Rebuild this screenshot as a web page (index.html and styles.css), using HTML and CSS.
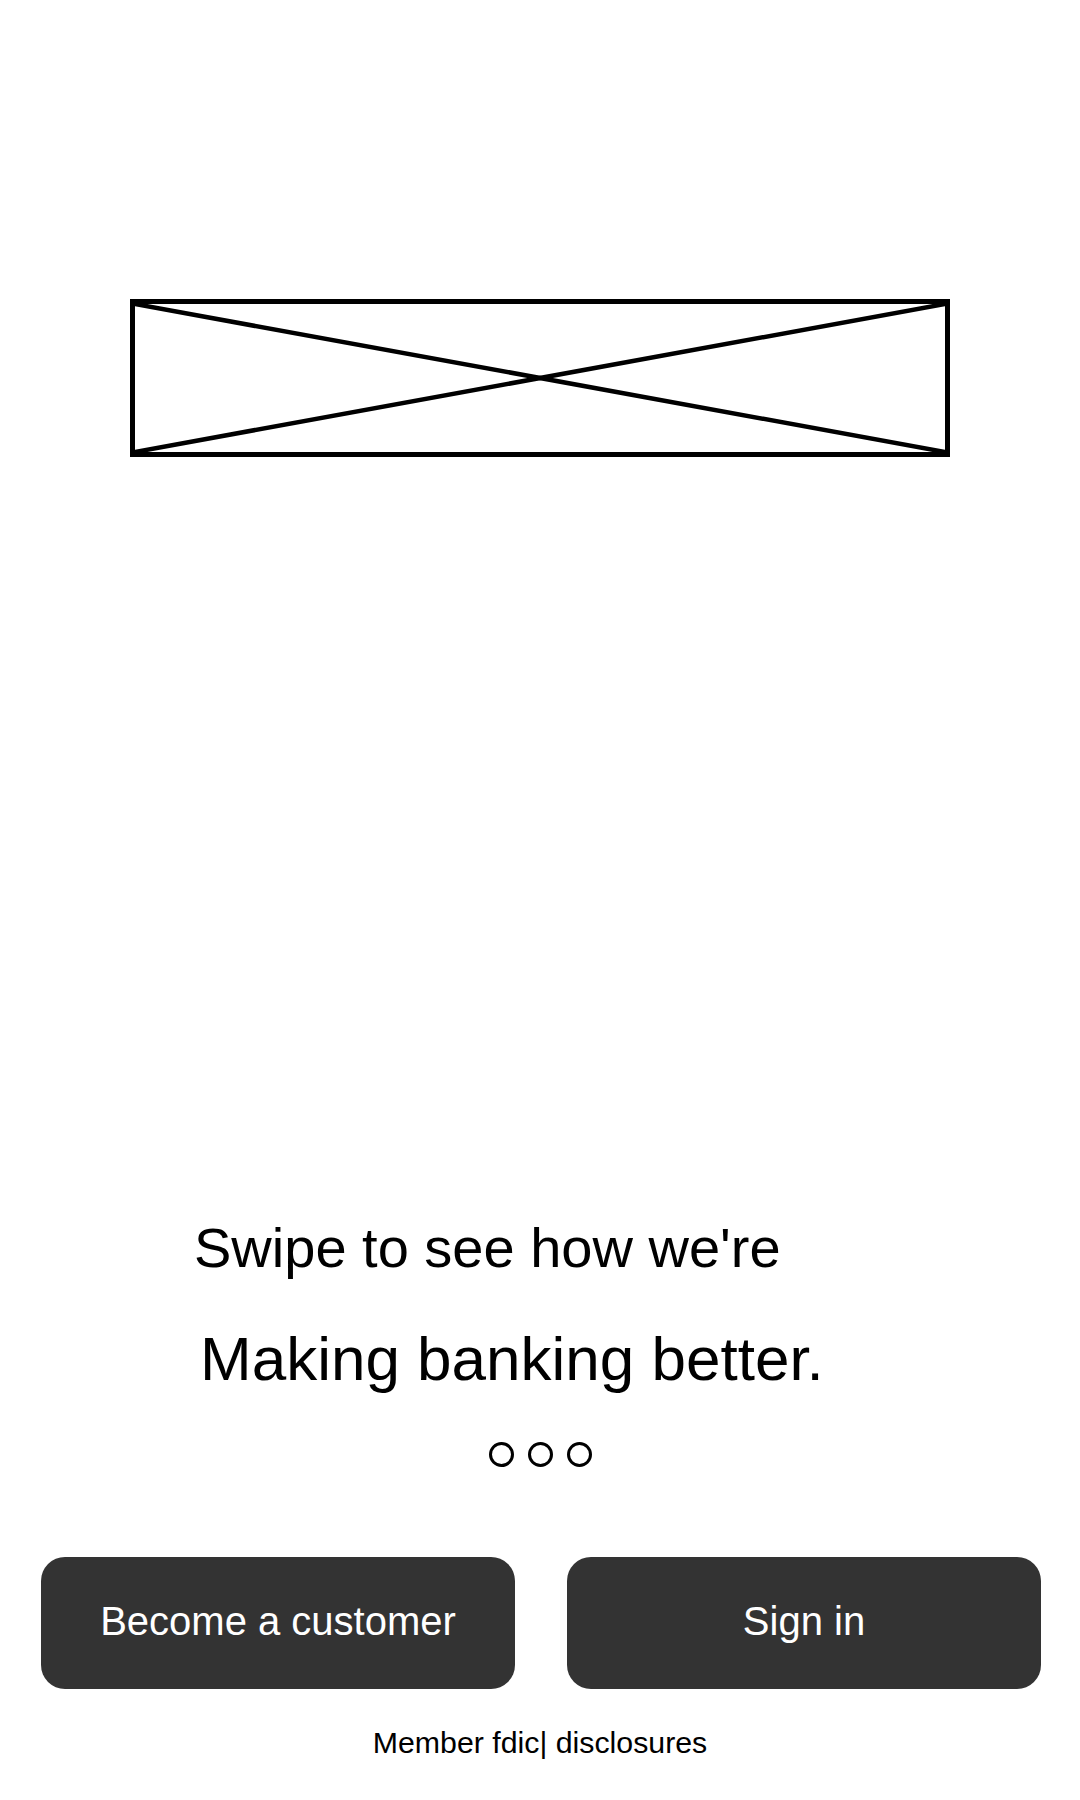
FILE: index.html
```html
<!DOCTYPE html>
<html lang="en">
<head>
<meta charset="utf-8">
<title>Welcome</title>
<link rel="stylesheet" href="styles.css">
</head>
<body>
<main class="screen">
  <div class="hero">
    <div class="placeholder">
      <svg class="cross" viewBox="0 0 810 148" preserveAspectRatio="none">
        <line x1="0" y1="0" x2="810" y2="148" />
        <line x1="810" y1="0" x2="0" y2="148" />
      </svg>
    </div>
  </div>
  <section class="intro">
    <p class="swipe">Swipe to see how we're</p>
    <h1 class="headline">Making banking better.</h1>
    <div class="dots">
      <span class="dot"></span>
      <span class="dot"></span>
      <span class="dot"></span>
    </div>
  </section>
  <div class="actions">
    <button class="btn">Become a customer</button>
    <button class="btn">Sign in</button>
  </div>
  <p class="footer">Member fdic| disclosures</p>
</main>
</body>
</html>
```

FILE: styles.css
```css
html, body {
  margin: 0;
  padding: 0;
  background: #ffffff;
}

body {
  font-family: "Liberation Sans", Arial, sans-serif;
  color: #000000;
}

.screen {
  width: 1080px;
  height: 1800px;
  display: flex;
  flex-direction: column;
}

.hero {
  padding-top: 299px;
  display: flex;
  justify-content: center;
}

.placeholder {
  width: 810px;
  height: 148px;
  border: 5px solid #000;
}

.cross {
  display: block;
  width: 100%;
  height: 100%;
}

.cross line {
  stroke: #000;
  stroke-width: 4.5;
  vector-effect: non-scaling-stroke;
}

.intro {
  margin-top: 763px;
  display: flex;
  flex-direction: column;
}

.swipe {
  margin: 0 0 0 194px;
  font-size: 56px;
  line-height: 56px;
  font-weight: 400;
}

.headline {
  margin: 52px 0 0 200px;
  font-size: 62px;
  line-height: 62px;
  font-weight: 400;
}

.dots {
  margin-top: 52px;
  display: flex;
  justify-content: center;
  gap: 14px;
}

.dot {
  width: 19px;
  height: 19px;
  border: 3px solid #000;
  border-radius: 50%;
}

.actions {
  margin-top: 90px;
  padding: 0 39px 0 41px;
  display: flex;
  gap: 52px;
}

.btn {
  flex: 1;
  height: 132px;
  border: none;
  border-radius: 24px;
  background: #333333;
  color: #ffffff;
  font-family: "Liberation Sans", Arial, sans-serif;
  font-size: 40px;
  padding: 0 0 4px;
}

.footer {
  margin: 39px 0 0;
  text-align: center;
  font-size: 30.3px;
  line-height: 30px;
}
```
